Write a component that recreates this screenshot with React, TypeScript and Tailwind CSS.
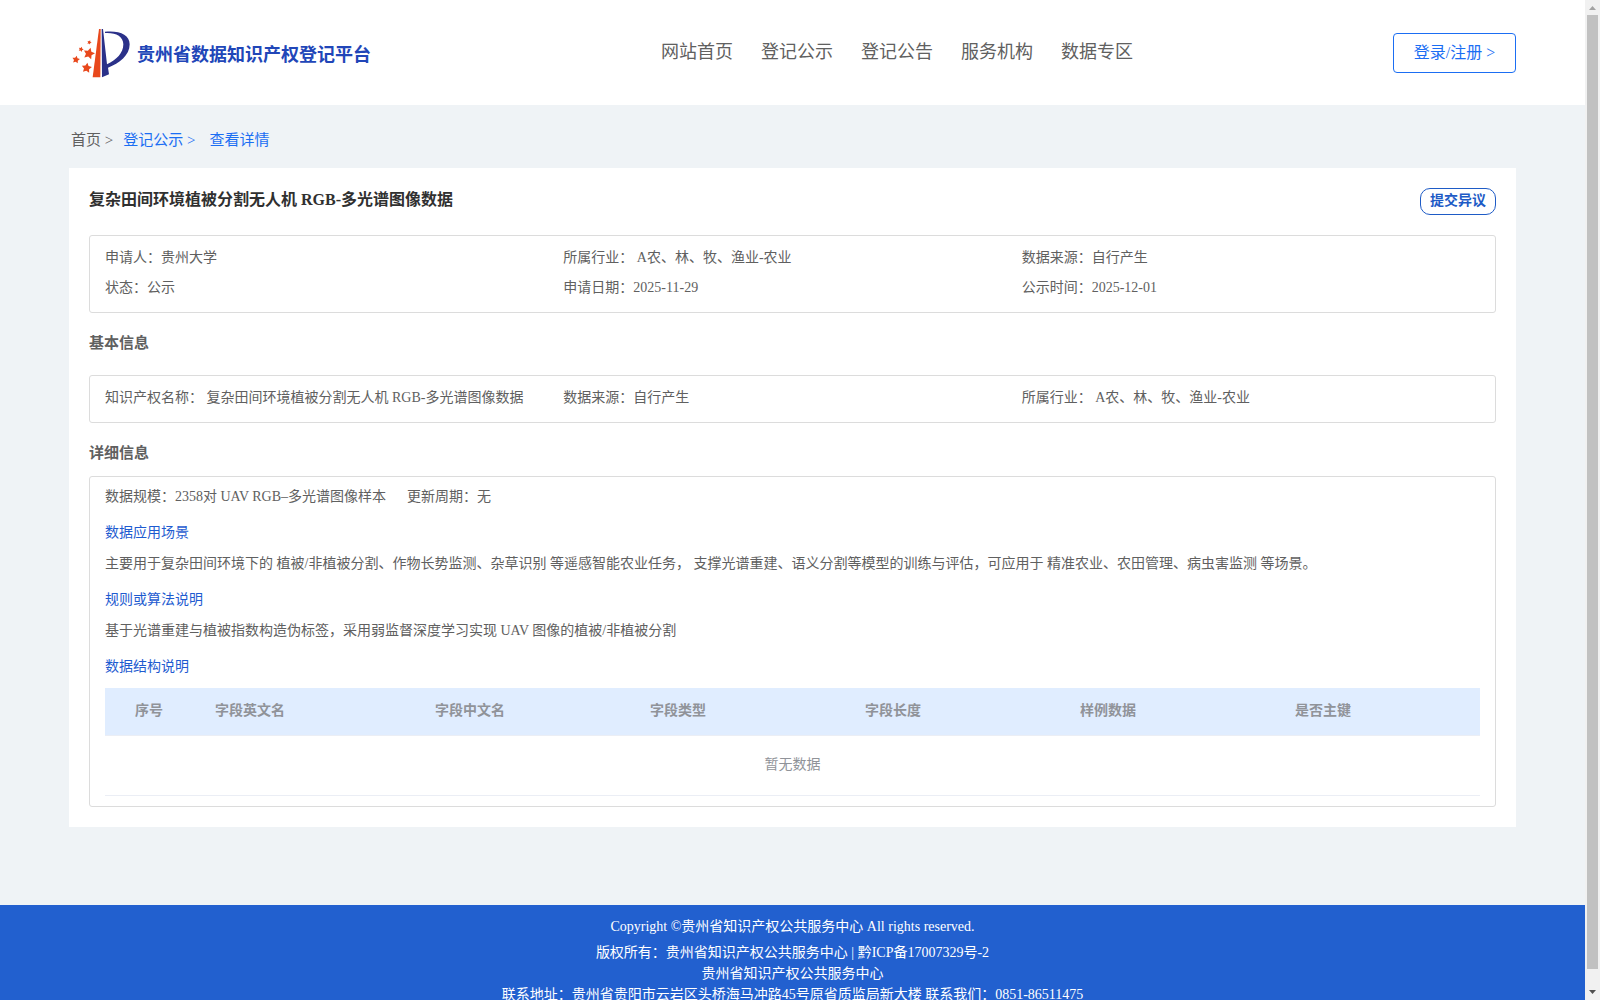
const navItems = ["网站首页", "登记公示", "登记公告", "服务机构", "数据专区"];

const summary = [
  { label: "申请人：", value: "贵州大学" },
  { label: "所属行业：", value: " A农、林、牧、渔业-农业" },
  { label: "数据来源：", value: "自行产生" },
  { label: "状态：", value: "公示" },
  { label: "申请日期：", value: "2025-11-29" },
  { label: "公示时间：", value: "2025-12-01" },
];

const basicInfo = [
  { label: "知识产权名称：", value: " 复杂田间环境植被分割无人机 RGB-多光谱图像数据" },
  { label: "数据来源：", value: "自行产生" },
  { label: "所属行业：", value: " A农、林、牧、渔业-农业" },
];

const columns = ["字段英文名", "字段中文名", "字段类型", "字段长度", "样例数据", "是否主键"];

const Star = ({ x, y, r, turn = 0 }: { x: number; y: number; r: number; turn?: number }) => (
  <path
    fill="#e8481c"
    transform={`translate(${x} ${y}) rotate(${turn}) scale(${r})`}
    d="M0-1 .3-.41 .95-.31 .48.16 .59.81 0 .51-.59.81-.48.16-.95-.31-.3-.41Z"
  />
);

const Logo = () => (
  <svg className="ml-px h-14 w-16 shrink-0" viewBox="0 0 192 168">
    <path fill="#e8481c" d="M87 12h5l-1 145H68Z" />
    <path
      fill="#2b3189"
      d="M95 12h4l12 106c28-13 49-34 49-60 0-25-24-36-55-34v-4c43-4 74 8 74 38 0 33-31 57-65 70l3 20-21 9Z"
    />
    <Star x={58} y={52} r={7} turn={20} />
    <Star x={33} y={73} r={8} turn={20} />
    <Star x={57} y={86} r={18} turn={15} />
    <Star x={18} y={104} r={12} turn={10} />
    <Star x={50} y={129} r={16} turn={8} />
  </svg>
);

const Header = () => (
  <header className="flex h-[105px] shrink-0 items-center bg-white pl-[69px] pr-[69px]">
    <div className="flex w-[592px] items-center">
      <Logo />
      <span className="ml-[3px] pt-1 text-[18px] font-bold leading-6 text-[#2146b8]">
        贵州省数据知识产权登记平台
      </span>
    </div>
    <nav className="flex gap-7 pb-0.5 text-[18px] leading-6">
      {navItems.map((item) => (
        <a key={item}>{item}</a>
      ))}
    </nav>
    <button className="ml-auto h-10 w-[123px] rounded border border-[#1b6ef3] text-base text-[#1b6ef3]">
      登录/注册 &gt;
    </button>
  </header>
);

const InfoGrid = ({ items }: { items: { label: string; value: string }[] }) => (
  <div className="grid grid-cols-3 whitespace-pre">
    {items.map((item) => (
      <div key={item.label}>
        {item.label}
        {item.value}
      </div>
    ))}
  </div>
);

const Detail = () => (
  <section className="mt-[11px] h-[331px] rounded-[3px] border border-[#dcdcdc] px-[15px] pt-2">
    <div className="flex gap-[21px] leading-6">
      <span>数据规模：2358对 UAV RGB–多光谱图像样本</span>
      <span>更新周期：无</span>
    </div>
    <h3 className="mt-3 leading-6 text-[#1e5bd0]">数据应用场景</h3>
    <p className="mt-[7px] whitespace-pre leading-6">
      主要用于复杂田间环境下的 植被/非植被分割、作物长势监测、杂草识别 等遥感智能农业任务， 支撑光谱重建、语义分割等模型的训练与评估，可应用于 精准农业、农田管理、病虫害监测 等场景。
    </p>
    <h3 className="mt-3 leading-6 text-[#1e5bd0]">规则或算法说明</h3>
    <p className="mt-[7px] leading-6">
      基于光谱重建与植被指数构造伪标签，采用弱监督深度学习实现 UAV 图像的植被/非植被分割
    </p>
    <h3 className="mt-3 leading-6 text-[#1e5bd0]">数据结构说明</h3>
    <div className="mt-[9px] text-[#909399]">
      <div className="grid h-12 grid-cols-[100px_220px_215px_215px_215px_215px_1fr] border-b border-[#ebeef5] bg-[#e0edff] pt-[11px] font-bold leading-6">
        <span className="pl-[30px]">序号</span>
        {columns.map((name) => (
          <span key={name} className="pl-2.5">
            {name}
          </span>
        ))}
      </div>
      <div className="h-[60px] border-b border-[#ebeef5] text-center leading-[58px]">暂无数据</div>
    </div>
  </section>
);

const Footer = () => (
  <footer className="mt-[78px] h-[95px] shrink-0 overflow-hidden bg-[#2260cf] pt-[11px] text-center leading-[21px] text-white">
    <p className="mb-[5px]">Copyright ©贵州省知识产权公共服务中心 All rights reserved.</p>
    <p>版权所有：贵州省知识产权公共服务中心 | 黔ICP备17007329号-2</p>
    <p>贵州省知识产权公共服务中心</p>
    <p>联系地址：贵州省贵阳市云岩区头桥海马冲路45号原省质监局新大楼 联系我们：0851-86511475</p>
  </footer>
);

const Scrollbar = () => (
  <div className="flex w-[15px] shrink-0 flex-col items-center bg-[#f1f1f1]">
    <svg className="h-[15px] w-[15px]" viewBox="0 0 15 15">
      <path fill="#a3a3a3" d="M4 10 7.5 6 11 10Z" />
    </svg>
    <div className="h-[954px] w-[11px] bg-[#c1c1c1]" />
    <svg className="mt-4 h-[15px] w-[15px]" viewBox="0 0 15 15">
      <path fill="#505050" d="M4 5h7L7.5 9Z" />
    </svg>
  </div>
);

const App = () => {
  return (
    <div className="flex h-[1000px] w-[1600px] overflow-hidden bg-[#eff3f6] font-['Liberation_Serif','Noto_Sans_CJK_SC',serif] text-sm text-[#606060]">
      <div className="flex min-w-0 flex-1 flex-col">
        <Header />
        <div className="flex h-[63px] shrink-0 items-center pl-[71px] pt-1.5 text-[15px] leading-6">
          <span>首页 &gt;</span>
          <span className="ml-2.5 text-[#1b6ef3]">登记公示 &gt;</span>
          <span className="ml-3.5 text-[#1b6ef3]">查看详情</span>
        </div>
        <main className="mx-[69px] h-[659px] shrink-0 bg-white px-5 pt-5">
          <div className="flex h-[47px] items-start justify-between">
            <h1 className="text-base font-bold leading-6 text-[#303030]">
              复杂田间环境植被分割无人机 RGB-多光谱图像数据
            </h1>
            <button className="h-[27px] w-[76px] rounded-[10px] border border-[#1e5bc6] pb-0.5 font-bold leading-6 text-[#1e5bc6]">
              提交异议
            </button>
          </div>
          <section className="h-[78px] rounded-[3px] border border-[#dcdcdc] px-[15px] pt-[7px] leading-[30px]">
            <InfoGrid items={summary} />
          </section>
          <h2 className="mt-[18px] text-[15px] font-bold leading-6">基本信息</h2>
          <section className="mt-5 h-12 rounded-[3px] border border-[#dcdcdc] px-[15px] pt-[7px] leading-[30px]">
            <InfoGrid items={basicInfo} />
          </section>
          <h2 className="mt-[18px] text-[15px] font-bold leading-6">详细信息</h2>
          <Detail />
        </main>
        <Footer />
      </div>
      <Scrollbar />
    </div>
  );
};

export default App;
